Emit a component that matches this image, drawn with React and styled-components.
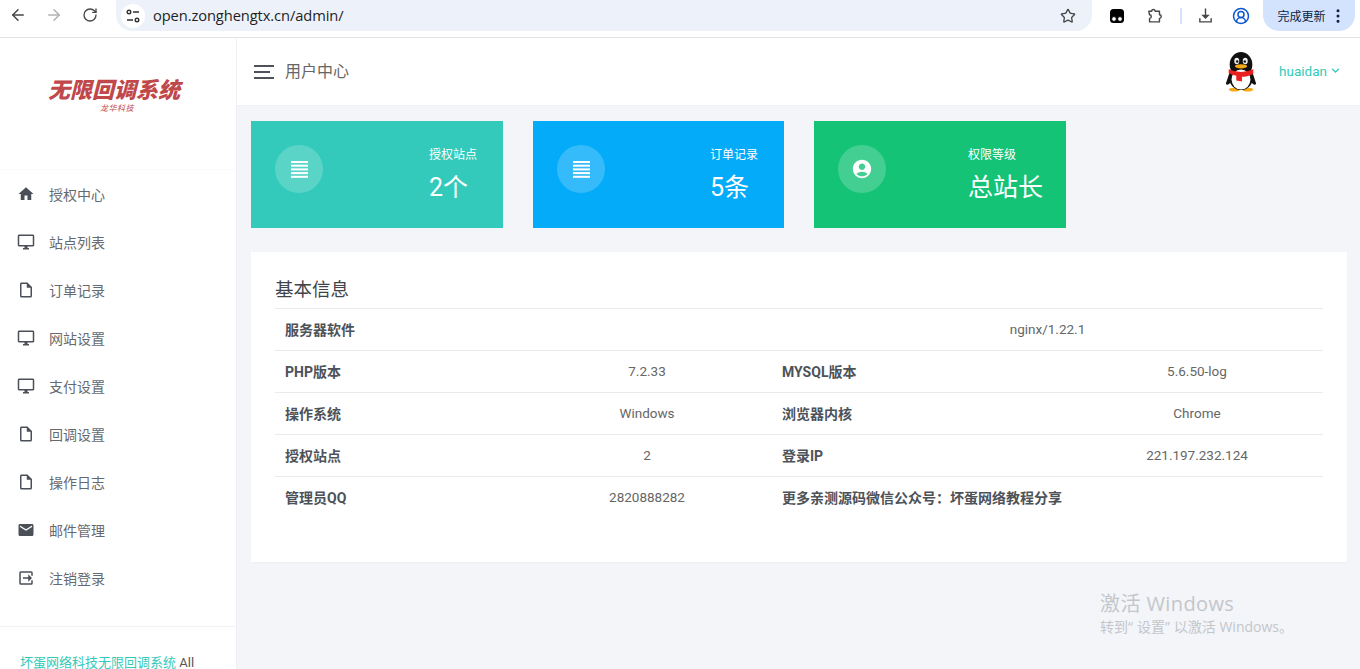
import React from "react";
import styled, { createGlobalStyle } from "styled-components";
import {
	MdHome,
	MdOutlineDesktopWindows,
	MdOutlineInsertDriveFile,
	MdEmail,
	MdAccountCircle,
	MdKeyboardArrowDown,
} from "react-icons/md";
import { ArrowLeft, ArrowRight, RotateCw, Star, CircleUserRound, EllipsisVertical } from "lucide-react";

const Global = createGlobalStyle`
	html, body {
		margin: 0;
		height: 100%;
		overflow: hidden;
		background: #f3f5f9;
		font-family: Roboto, "Noto Sans CJK SC", sans-serif;
		font-size: 13px;
		color: #555;
	}
	* { box-sizing: border-box; }
`;

const Page = styled.div`
	position: relative;
	width: 1360px;
	height: 669px;
	overflow: hidden;
	display: flex;
	flex-direction: column;
`;

/* browser chrome */
const Toolbar = styled.div`
	height: 38px;
	flex: none;
	background: #fff;
	border-bottom: 1px solid #e3e3e3;
	display: flex;
	align-items: flex-start;
	padding-left: 8px;
	color: #474747;
`;
const NavBtn = styled.span`
	width: 20px;
	height: 20px;
	margin: 5px 16px 0 0;
	display: flex;
	align-items: center;
	justify-content: center;
	color: ${(p) => (p.$off ? "#b2b2b2" : "#474747")};
`;
const Omnibox = styled.div`
	width: 976px;
	height: 31px;
	background: #edf2fa;
	border-radius: 0 0 16px 16px;
	display: flex;
	align-items: center;
	padding: 0 16px 0 5px;
`;
const TuneBtn = styled.span`
	width: 24px;
	height: 24px;
	border-radius: 50%;
	background: #fff;
	display: flex;
	align-items: center;
	justify-content: center;
	margin-right: 8px;
`;
const Url = styled.span`
	flex: 1;
	font-size: 14.7px;
	color: #1f1f1f;
	font-family: "Open Sans", sans-serif;
	letter-spacing: -0.1px;
	margin-top: -2px;
`;
const ToolSlot = styled.span`
	height: 31px;
	display: flex;
	align-items: center;
	flex: none;
	margin-left: ${(p) => p.$ml}px;
`;
const Divider = styled.span`
	width: 1.5px;
	height: 16px;
	background: #d3e3fd;
`;
const UpdateBtn = styled.div`
	width: 92px;
	height: 31px;
	margin-left: 13px;
	background: #d3e3fd;
	border-radius: 0 0 16px 16px;
	display: flex;
	align-items: center;
	padding-left: 15px;
	gap: 3px;
	font-size: 12px;
	color: #0a1f44;
`;

/* page frame */
const Body = styled.div`
	flex: 1;
	display: flex;
	min-height: 0;
`;
const Sidebar = styled.aside`
	width: 237px;
	flex: none;
	background: #fff;
	border-right: 1px solid #eef0f4;
	display: flex;
	flex-direction: column;
`;
const LogoBox = styled.div`
	height: 132px;
	flex: none;
	padding: 36px 8px 0 0;
	display: flex;
	flex-direction: column;
	align-items: center;
	border-bottom: 1px solid #fafafa;
`;
const LogoMain = styled.div`
	font-size: 22px;
	line-height: 28px;
	font-weight: 900;
	font-style: italic;
	color: #c0474a;
	font-family: "Noto Sans CJK SC", sans-serif;
`;
const LogoSub = styled.div`
	font-size: 8px;
	line-height: 10px;
	margin: 1px 0 0 6px;
	letter-spacing: 0.5px;
	font-style: italic;
	color: #c0474a;
	font-family: "Noto Sans CJK SC", sans-serif;
`;
const Nav = styled.nav`
	padding-bottom: 24px;
	border-bottom: 1px solid #f3f3f3;
`;
const NavRow = styled.div`
	height: 48px;
	display: flex;
	align-items: center;
	padding-left: 17px;
	font-size: 14px;
	color: #666a70;
	& svg {
		flex: none;
		color: #4b5058;
	}
	& > span {
		margin-left: 14px;
	}
`;
const SideFoot = styled.div`
	padding: 27px 20px 0;
	font-size: 13px;
	line-height: 18px;
	color: #555;
	& a {
		color: #33cabb;
	}
`;

const Main = styled.main`
	flex: 1;
	min-width: 0;
	display: flex;
	flex-direction: column;
`;
const Header = styled.header`
	height: 68px;
	flex: none;
	background: #fff;
	display: flex;
	align-items: center;
	padding: 0 17px;
	border-bottom: 1px solid #f0f1f4;
`;
const Burger = styled.span`
	width: 20px;
	height: 14px;
	border-top: 2px solid #4d5259;
	border-bottom: 2px solid #4d5259;
	position: relative;
	margin-right: 11px;
	&::after {
		content: "";
		position: absolute;
		left: 0;
		right: 4px;
		top: 4px;
		height: 2px;
		background: #4d5259;
	}
`;
const PageTitle = styled.span`
	flex: 1;
	font-size: 16px;
	line-height: 22px;
	margin-top: 1px;
	color: #666;
`;
const UserName = styled.span`
	margin: -2px 0 0 21px;
	font-size: 13.5px;
	color: #33cabb;
	display: flex;
	align-items: center;
	gap: 1px;
`;
const Content = styled.div`
	padding: 15px 13px 0 14px;
`;
const Cards = styled.div`
	display: flex;
	gap: 30px;
	margin-bottom: 24px;
`;
const Card = styled.div`
	width: ${(p) => p.$width}px;
	height: 107px;
	background: ${(p) => p.$bg};
	padding: 24px 24px 0;
	display: flex;
	color: #fff;
`;
const IconCircle = styled.span`
	width: 48px;
	height: 48px;
	border-radius: 50%;
	background: rgba(255, 255, 255, 0.2);
	display: flex;
	align-items: center;
	justify-content: center;
	flex: none;
`;
const CardText = styled.div`
	margin-left: ${(p) => p.$left}px;
	display: flex;
	flex-direction: column;
`;
const CardLabel = styled.span`
	font-size: 12px;
	line-height: 20px;
`;
const CardValue = styled.span`
	font-size: 25px;
	line-height: 34px;
	margin-top: 6px;
	white-space: nowrap;
`;
const Panel = styled.section`
	height: 310px;
	background: #fff;
	padding: 24px;
	box-shadow: 0 1px 2px rgba(0, 0, 0, 0.03);
`;
const PanelTitle = styled.h4`
	margin: 0;
	padding-bottom: 4px;
	font-size: 18.5px;
	font-weight: 400;
	line-height: 28px;
	color: #3f4449;
`;
const Table = styled.div`
	display: grid;
	grid-template-columns: 247px 250px 299px 252px;
	grid-auto-rows: 42px;
`;
const Cell = styled.div`
	grid-column: span ${(p) => p.$span || 1};
	border-top: 1px solid #ebebeb;
	display: flex;
	align-items: center;
	padding: 0 10px 2px;
	color: ${(p) => (p.$label ? "#4d5259" : "#666")};
	font-weight: ${(p) => (p.$label ? 700 : 400)};
	font-size: ${(p) => (p.$label ? 14 : 13.5)}px;
	justify-content: ${(p) => (p.$label ? "flex-start" : "center")};
`;
const Watermark = styled.div`
	position: absolute;
	left: 1100px;
	top: 591px;
	color: #c4c6ca;
	font-family: "Open Sans", "Noto Sans CJK SC", sans-serif;
`;
const WmBig = styled.div`
	font-size: 20px;
	line-height: 26px;
	letter-spacing: 0.4px;
`;
const WmSmall = styled.div`
	font-size: 14px;
	line-height: 20px;
`;
const WmQuote = styled.span`
	letter-spacing: 4px;
`;

const Headline = () => (
	<svg width="17" height="17" viewBox="0 0 17 17" fill="#fff">
		<rect y="0" width="17" height="2" />
		<rect y="3.7" width="17" height="2" />
		<rect y="7.4" width="17" height="2" />
		<rect y="11.1" width="17" height="2" />
		<rect y="14.8" width="17" height="2" />
	</svg>
);

const LogoutIcon = () => (
	<svg width="18" height="18" viewBox="0 0 24 24" fill="currentColor">
		<path d="M5 3h14a2 2 0 0 1 2 2v4h-2V5H5v14h14v-4h2v4a2 2 0 0 1-2 2H5a2 2 0 0 1-2-2V5a2 2 0 0 1 2-2z" />
		<path d="M15 7l5 5-5 5v-4H8v-2h7z" />
	</svg>
);

const Penguin = () => (
	<svg width="34" height="40" viewBox="0 0 36 42" preserveAspectRatio="none">
		<ellipse cx="11" cy="39.5" rx="6" ry="2" fill="#f5a914" />
		<ellipse cx="25" cy="39.5" rx="6" ry="2" fill="#f5a914" />
		<ellipse cx="18" cy="13" rx="12" ry="13" fill="#111" />
		<path d="M7 18 L2 33 Q3 36 7 32 Z M29 18 L34 33 Q33 36 29 32 Z" fill="#111" />
		<ellipse cx="18" cy="27" rx="12.5" ry="13" fill="#111" />
		<ellipse cx="18" cy="29" rx="10" ry="10.5" fill="#fff" />
		<ellipse cx="13.5" cy="9.5" rx="2.6" ry="3.4" fill="#eee" />
		<ellipse cx="22.5" cy="9.5" rx="2.6" ry="3.4" fill="#eee" />
		<circle cx="14" cy="10" r="1.3" fill="#111" />
		<circle cx="22" cy="10" r="1.3" fill="#111" />
		<ellipse cx="18" cy="15" rx="6.5" ry="2.2" fill="#f5a914" />
		<path d="M5 18 Q18 24 31 18 L31 23 Q24 26 19 26 L19 31 L13 30 L13 25 Q8 24 5 22 Z" fill="#e8201f" />
	</svg>
);

const TadIcon = () => (
	<svg width="16" height="16" viewBox="0 0 16 16">
		<rect x="1" y="1" width="14" height="14" rx="3.5" fill="#000" />
		<circle cx="5" cy="11" r="2.4" fill="#fff" stroke="#000" />
		<circle cx="11" cy="11" r="2.4" fill="#fff" stroke="#000" />
	</svg>
);

const TuneIcon = () => (
	<svg width="16" height="16" viewBox="0 0 16 16" fill="none" stroke="#333" strokeWidth="1.4">
		<circle cx="4" cy="4" r="1.8" />
		<path d="M8 4h6M2 12h6" />
		<circle cx="12" cy="12" r="1.8" />
	</svg>
);

const ExtensionIcon = () => (
	<svg width="17" height="17" viewBox="0 0 24 24" fill="none" stroke="#474747" strokeWidth="2" strokeLinejoin="round">
		<path d="M4 6h4a2.5 2.5 0 0 1 5 0h6v5a2.5 2.5 0 0 1 0 5v5H5v-5a2.5 2.5 0 0 0 0-5z" />
	</svg>
);

const DownloadIcon = () => (
	<svg width="17" height="17" viewBox="0 0 24 24" fill="#474747">
		<path d="M11 2h2v9h5l-6 6-6-6h5z" />
		<path d="M3 16h2v4h14v-4h2v6H3z" />
	</svg>
);

const menu = [
	["授权中心", <MdHome size={18} />],
	["站点列表", <MdOutlineDesktopWindows size={18} />],
	["订单记录", <MdOutlineInsertDriveFile size={18} />],
	["网站设置", <MdOutlineDesktopWindows size={18} />],
	["支付设置", <MdOutlineDesktopWindows size={18} />],
	["回调设置", <MdOutlineInsertDriveFile size={18} />],
	["操作日志", <MdOutlineInsertDriveFile size={18} />],
	["邮件管理", <MdEmail size={18} />],
	["注销登录", <LogoutIcon />],
];

const rows = [
	["PHP版本", "7.2.33", "MYSQL版本", "5.6.50-log"],
	["操作系统", "Windows", "浏览器内核", "Chrome"],
	["授权站点", "2", "登录IP", "221.197.232.124"],
];

export default function App() {
	return (
		<Page>
			<Global />
			<Toolbar>
				<NavBtn><ArrowLeft size={18} /></NavBtn>
				<NavBtn $off><ArrowRight size={18} /></NavBtn>
				<NavBtn><RotateCw size={16} /></NavBtn>
				<Omnibox>
					<TuneBtn><TuneIcon /></TuneBtn>
					<Url>open.zonghengtx.cn/admin/</Url>
					<Star size={16} />
				</Omnibox>
				<ToolSlot $ml={17}><TadIcon /></ToolSlot>
				<ToolSlot $ml={21}><ExtensionIcon /></ToolSlot>
				<ToolSlot $ml={17}><Divider /></ToolSlot>
				<ToolSlot $ml={15}><DownloadIcon /></ToolSlot>
				<ToolSlot $ml={18}><CircleUserRound size={18} color="#0b57d0" /></ToolSlot>
				<UpdateBtn>
					完成更新
					<EllipsisVertical size={18} />
				</UpdateBtn>
			</Toolbar>
			<Body>
				<Sidebar>
					<LogoBox>
						<LogoMain>无限回调系统</LogoMain>
						<LogoSub>龙华科技</LogoSub>
					</LogoBox>
					<Nav>
						{menu.map(([label, icon]) => (
							<NavRow key={label}>
								{icon}
								<span>{label}</span>
							</NavRow>
						))}
					</Nav>
					<SideFoot>
						<a>坏蛋网络科技无限回调系统</a> All Rights Reserved
					</SideFoot>
				</Sidebar>
				<Main>
					<Header>
						<Burger />
						<PageTitle>用户中心</PageTitle>
						<Penguin />
						<UserName>
							huaidan
							<MdKeyboardArrowDown size={15} />
						</UserName>
					</Header>
					<Content>
						<Cards>
							<Card $bg="#33cabb" $width={252}>
								<IconCircle><Headline /></IconCircle>
								<CardText $left={106}>
									<CardLabel>授权站点</CardLabel>
									<CardValue>2个</CardValue>
								</CardText>
							</Card>
							<Card $bg="#04abf9" $width={251}>
								<IconCircle><Headline /></IconCircle>
								<CardText $left={105}>
									<CardLabel>订单记录</CardLabel>
									<CardValue>5条</CardValue>
								</CardText>
							</Card>
							<Card $bg="#15c377" $width={252}>
								<IconCircle><MdAccountCircle size={22} color="#fff" /></IconCircle>
								<CardText $left={82}>
									<CardLabel>权限等级</CardLabel>
									<CardValue>总站长</CardValue>
								</CardText>
							</Card>
						</Cards>
						<Panel>
							<PanelTitle>基本信息</PanelTitle>
							<Table>
								<Cell $label $span={2}>服务器软件</Cell>
								<Cell $span={2}>nginx/1.22.1</Cell>
								{rows.map((r) => (
									<React.Fragment key={r[0]}>
										<Cell $label>{r[0]}</Cell>
										<Cell>{r[1]}</Cell>
										<Cell $label>{r[2]}</Cell>
										<Cell>{r[3]}</Cell>
									</React.Fragment>
								))}
								<Cell $label>管理员QQ</Cell>
								<Cell>2820888282</Cell>
								<Cell $label $span={2}>更多亲测源码微信公众号：坏蛋网络教程分享</Cell>
							</Table>
						</Panel>
					</Content>
				</Main>
			</Body>
			<Watermark>
				<WmBig>激活 Windows</WmBig>
				<WmSmall>转到<WmQuote>“</WmQuote>设置<WmQuote>”</WmQuote>以激活 Windows。</WmSmall>
			</Watermark>
		</Page>
	);
}
